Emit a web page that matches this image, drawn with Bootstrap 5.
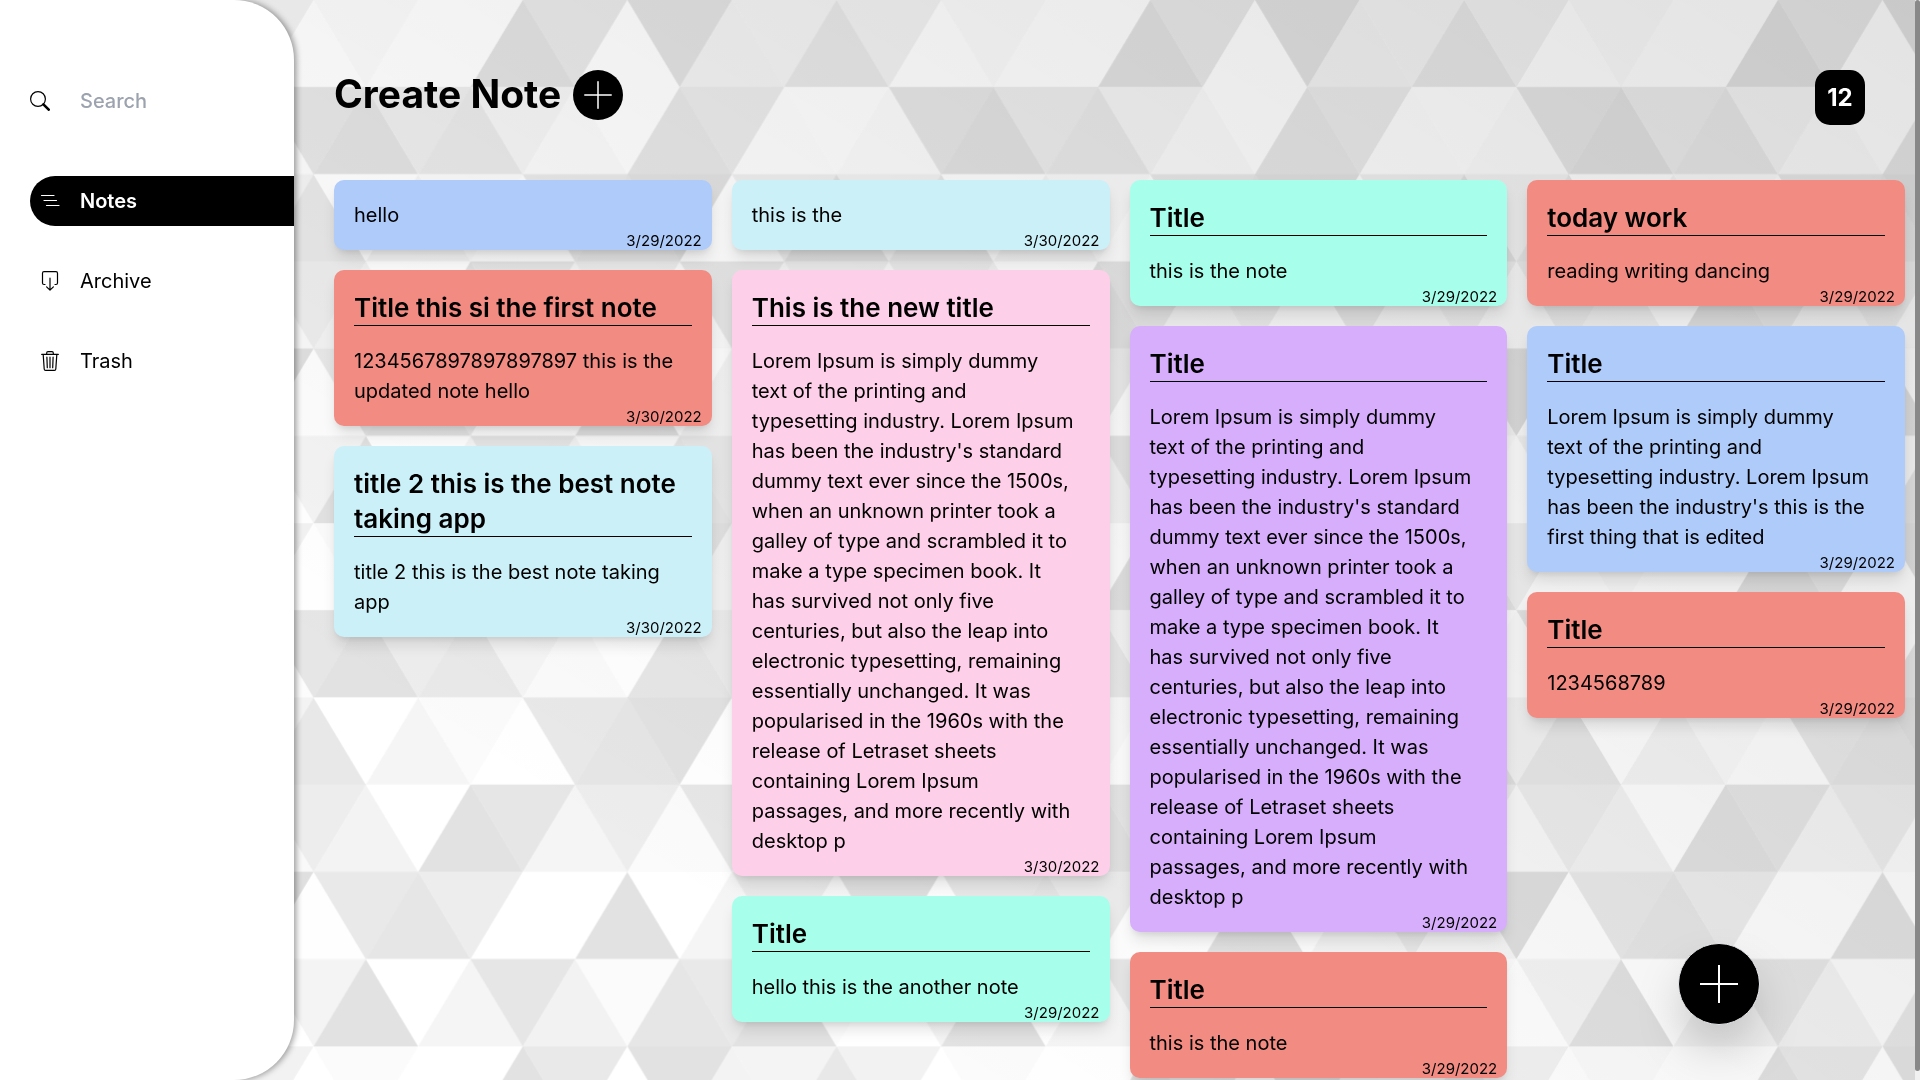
<!DOCTYPE html>
<html lang="en">
<head>
<meta charset="utf-8">
<meta name="viewport" content="width=device-width, initial-scale=1">
<title>Notes</title>
<link href="https://cdn.jsdelivr.net/npm/bootstrap@5.3.0/dist/css/bootstrap.min.css" rel="stylesheet">
<style>
  body { font-family: Inter, "Open Sans", sans-serif; font-size: 20px; line-height: 30px; color: #000; background: #f2f2f2; }
  .backdrop { position: fixed; inset: 0; width: 100%; height: 100%; z-index: -1; }

  .side { width: 294px; height: 100vh; padding: 76px 0 0 30px; border-radius: 0 60px 60px 0; box-shadow: 2px 0 6px rgba(0,0,0,.4); }
  .side svg { width: 20px; height: 20px; flex: none; }
  .search-row { height: 50px; gap: 30px; margin-bottom: 50px; }
  .search-row input { font-size: 20px; font-weight: 500; }
  .search-row input::placeholder { color: #9ca3af; opacity: 1; }
  .side-nav { gap: 30px; }
  .side-link { height: 50px; gap: 20px; padding-left: 10px; border-radius: 25px 0 0 25px; color: #000; text-decoration: none; }
  .side-link.active { background: #000; color: #fff; font-weight: 600; }

  .board { min-width: 0; padding: 70px 15px 0 40px; }
  .board-head { padding: 0 40px 55px 0; }
  .board-head h1 { font-size: 39px; line-height: 48px; font-weight: 700; }
  .board-title { gap: 12px; height: 50px; }
  .round-btn { border: 0; padding: 0; border-radius: 50%; background: #000; color: #fff; }
  .round-btn.small-one { width: 50px; height: 50px; }
  .tally { width: 50px; height: 55px; border-radius: 15px; background: #000; color: #fff; font-size: 24px; font-weight: 700; }

  .note-cols { --bs-gutter-x: 20px; }
  .note-stack { gap: 20px; }
  .note { padding: 20px 20px 0; border-radius: 10px; box-shadow: 0 10px 15px -3px rgba(0,0,0,.12), 0 4px 6px -2px rgba(0,0,0,.08); }
  .note h2 { font-size: 26px; line-height: 35px; font-weight: 600; margin: 0 0 20px; border-bottom: 1px solid #000; white-space: nowrap; }
  .note p { margin: 0; white-space: nowrap; }
  .note time { display: block; text-align: right; font-size: 15px; line-height: 18px; padding-top: 2px; margin-right: -10px; }
  .n-blue { background: #aecbfa; } .n-red { background: #f28b82; } .n-cyan { background: #cbf0f8; }
  .n-pink { background: #fdcfe8; } .n-teal { background: #a7ffeb; } .n-purple { background: #d7aefb; }

  .fab { position: fixed; right: 160px; bottom: 55px; width: 82px; height: 82px; border: 1px solid #e5e7eb; box-shadow: 0 25px 50px -8px rgba(0,0,0,.25); }
  .thumb { position: fixed; top: 0; right: 0; width: 5px; height: 1071px; max-height: 100vh; border-radius: 3px; background: #888; }
  .track { position: fixed; top: 0; right: 0; width: 5px; height: 100vh; background: #f1f1f1; }
</style>
</head>
<body>
<svg class="backdrop" aria-hidden="true">
  <defs>
    <pattern id="tri" width="627.6" height="523.2" patternUnits="userSpaceOnUse"></pattern>
    <linearGradient id="shade" gradientUnits="userSpaceOnUse" x1="0" y1="461" x2="776" y2="-739">
      <stop offset="0" stop-color="#000" stop-opacity="0"/>
      <stop offset="1" stop-color="#000" stop-opacity=".11"/>
    </linearGradient>
  </defs>
  <rect width="100%" height="100%" fill="url(#tri)"/>
  <rect width="100%" height="100%" fill="url(#shade)"/>
</svg>

<div class="d-flex align-items-start">
  <aside class="side bg-white flex-shrink-0 sticky-top">
    <div class="search-row d-flex align-items-center">
      <svg viewBox="0 0 20 20" fill="none" stroke="#000" aria-hidden="true"><circle cx="8" cy="8" r="7.4" stroke-width="1.2"/><path d="M13.4 13.4 18.7 18.7" stroke-width="2.6" stroke-linecap="round"/></svg>
      <input type="text" class="form-control-plaintext p-0 border-0" placeholder="Search" aria-label="Search">
    </div>
    <nav class="side-nav d-flex flex-column">
      <a href="#" class="side-link active d-flex align-items-center">
        <svg viewBox="0 0 20 20" fill="none" stroke="currentColor" stroke-width="1.2" stroke-linecap="round" aria-hidden="true"><path d="M1.5 4.500H14M4 9.500H16.500M6.500 14.500H19"/></svg>
        Notes</a>
      <a href="#" class="side-link d-flex align-items-center">
        <svg viewBox="0 0 20 20" fill="none" stroke="currentColor" stroke-width="1.2" stroke-linecap="round" stroke-linejoin="round" aria-hidden="true"><path d="M5 13.500H4Q2.500 13.500 2.500 12V2.200Q2.500.700 4 .700H16Q17.500.700 17.500 2.200V12Q17.500 13.500 16 13.500H15M10 7.200V19M6.600 15.800 10 19.200 13.400 15.800"/></svg>
        Archive</a>
      <a href="#" class="side-link d-flex align-items-center">
        <svg viewBox="0 0 20 20" fill="none" stroke="currentColor" stroke-width="1.2" stroke-linecap="round" stroke-linejoin="round" aria-hidden="true"><path d="M1.700 3.400H18.300M6.700 3.200V2Q6.700.700 8 .700H12Q13.300.700 13.300 2V3.200M3.200 3.600 4.200 18Q4.300 19.400 5.600 19.400H14.400Q15.700 19.400 15.800 18L16.800 3.600M6.900 6.200 7.300 16.700M10 6.200V16.700M13.100 6.200 12.700 16.700"/></svg>
        Trash</a>
    </nav>
  </aside>

  <main class="board flex-grow-1">
    <header class="board-head d-flex justify-content-between align-items-start">
      <div class="board-title d-flex">
        <h1 class="mb-0">Create Note</h1>
        <button type="button" class="round-btn small-one d-flex align-items-center justify-content-center" aria-label="Create note">
          <svg width="28" height="28" viewBox="0 0 28 28" stroke="#fff" stroke-width="1.500" stroke-linecap="round" aria-hidden="true"><path d="M14 .8V27.200M.8 14H27.200"/></svg>
        </button>
      </div>
      <div class="tally d-flex align-items-center justify-content-center">12</div>
    </header>

    <div class="row row-cols-4 note-cols">
      <div class="col d-flex flex-column note-stack">
        <article class="note n-blue"><p>hello</p><time>3/29/2022</time></article>
        <article class="note n-red"><h2>Title this si the first note</h2><p>1234567897897897897 this is the<br>updated note hello</p><time>3/30/2022</time></article>
        <article class="note n-cyan"><h2>title 2 this is the best note<br>taking app</h2><p>title 2 this is the best note taking<br>app</p><time>3/30/2022</time></article>
      </div>
      <div class="col d-flex flex-column note-stack">
        <article class="note n-cyan"><p>this is the</p><time>3/30/2022</time></article>
        <article class="note n-pink"><h2>This is the new title</h2>
          <p>Lorem Ipsum is simply dummy<br>text of the printing and<br>typesetting industry. Lorem Ipsum<br>has been the industry's standard<br>dummy text ever since the 1500s,<br>when an unknown printer took a<br>galley of type and scrambled it to<br>make a type specimen book. It<br>has survived not only five<br>centuries, but also the leap into<br>electronic typesetting, remaining<br>essentially unchanged. It was<br>popularised in the 1960s with the<br>release of Letraset sheets<br>containing Lorem Ipsum<br>passages, and more recently with<br>desktop p</p><time>3/30/2022</time></article>
        <article class="note n-teal"><h2>Title</h2><p>hello this is the another note</p><time>3/29/2022</time></article>
      </div>
      <div class="col d-flex flex-column note-stack">
        <article class="note n-teal"><h2>Title</h2><p>this is the note</p><time>3/29/2022</time></article>
        <article class="note n-purple"><h2>Title</h2>
          <p>Lorem Ipsum is simply dummy<br>text of the printing and<br>typesetting industry. Lorem Ipsum<br>has been the industry's standard<br>dummy text ever since the 1500s,<br>when an unknown printer took a<br>galley of type and scrambled it to<br>make a type specimen book. It<br>has survived not only five<br>centuries, but also the leap into<br>electronic typesetting, remaining<br>essentially unchanged. It was<br>popularised in the 1960s with the<br>release of Letraset sheets<br>containing Lorem Ipsum<br>passages, and more recently with<br>desktop p</p><time>3/29/2022</time></article>
        <article class="note n-red"><h2>Title</h2><p>this is the note</p><time>3/29/2022</time></article>
      </div>
      <div class="col d-flex flex-column note-stack">
        <article class="note n-red"><h2>today work</h2><p>reading writing dancing</p><time>3/29/2022</time></article>
        <article class="note n-blue"><h2>Title</h2>
          <p>Lorem Ipsum is simply dummy<br>text of the printing and<br>typesetting industry. Lorem Ipsum<br>has been the industry's this is the<br>first thing that is edited</p><time>3/29/2022</time></article>
        <article class="note n-red"><h2>Title</h2><p>1234568789</p><time>3/29/2022</time></article>
      </div>
    </div>
  </main>
</div>

<button type="button" class="round-btn fab d-flex align-items-center justify-content-center" aria-label="New note">
  <svg width="38" height="38" viewBox="0 0 38 38" stroke="#fff" stroke-width="2" aria-hidden="true"><path d="M19 0V38M0 19H38"/></svg>
</button>
<div class="track"></div>
<div class="thumb"></div>

<script src="https://cdn.jsdelivr.net/npm/bootstrap@5.3.0/dist/js/bootstrap.bundle.min.js"></script>
<script>
  // Grey levels of the triangle tile: six rows of twelve, pointing up where row + index is even.
  var tones = [
    'FF E2 F3 F4 E8 F2 FF FB FF FF E2 E9',
    'FF E7 EB FE FF FC E6 E2 ED E9 F5 FB',
    'E6 E2 FF F0 E2 F3 E8 FF F5 FB FF E9',
    'ED FB E7 F6 EE F9 ED F3 FF E2 E6 F5',
    'E2 FF F5 E9 F6 DF FE E9 E6 ED FF FF',
    'FB E6 E9 E2 FC FF F4 E2 FF F5 E6 F2'
  ];
  var half = 52.3, rowH = 87.2, tile = document.getElementById('tri');
  tones.forEach(function (row, r) {
    var t = row.split(' ');
    for (var j = -1; j <= 12; j++) {
      var up = (j + r) % 2 === 0, x = j * half, top = r * rowH, bottom = top + rowH;
      var apex = up ? top : bottom, base = up ? bottom : top;
      var p = document.createElementNS('http://www.w3.org/2000/svg', 'polygon');
      p.setAttribute('points', [x, apex, x + half, base, x - half, base].join(' '));
      var c = '#' + t[(j + 12) % 12].repeat(3);
      p.setAttribute('fill', c);
      p.setAttribute('stroke', c);
      p.setAttribute('stroke-width', '.5');
      tile.appendChild(p);
    }
  });
</script>
</body>
</html>
